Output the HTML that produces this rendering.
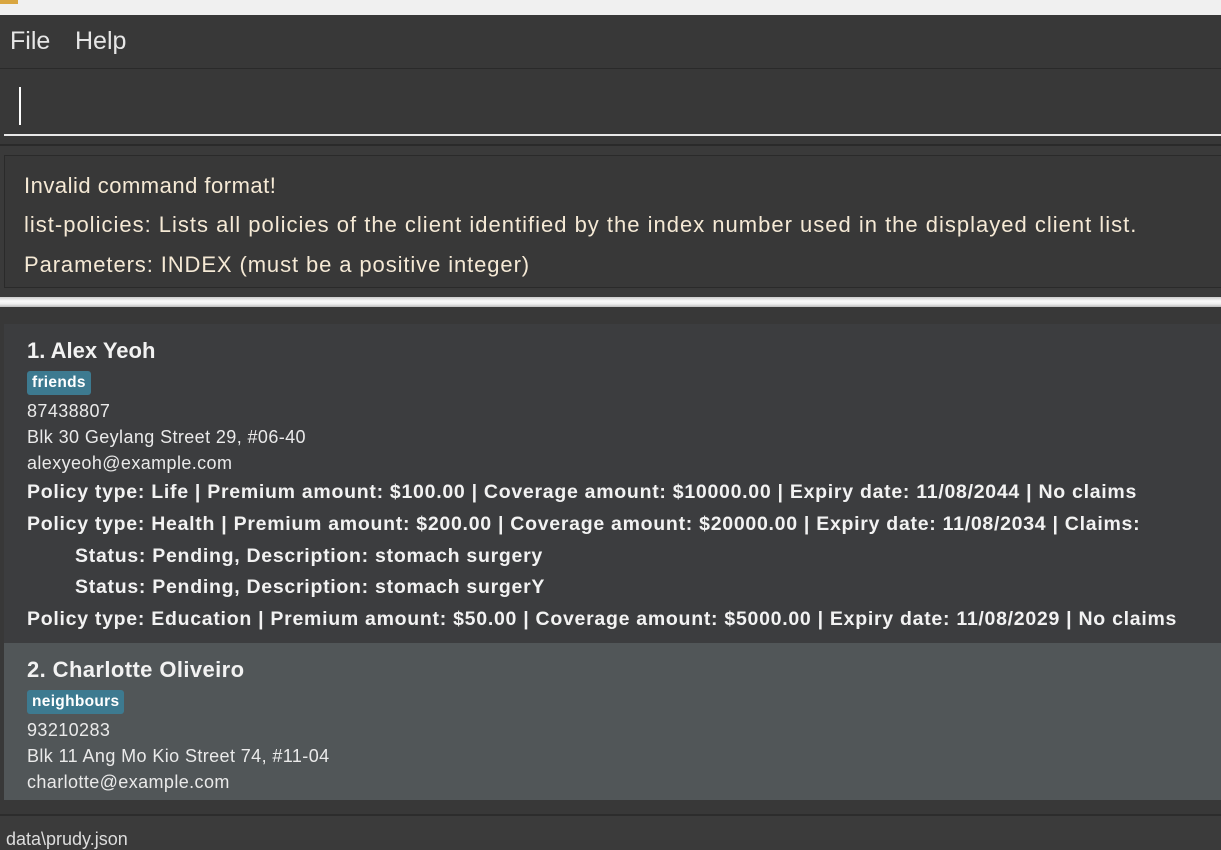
<!DOCTYPE html>
<html><head><meta charset="utf-8"><style>
body{margin:0;width:1221px;height:838px;overflow:hidden;background:#3a3a3a;font-family:"Liberation Sans",sans-serif;position:relative}
div{position:absolute;white-space:nowrap}
.b{font-weight:bold;font-size:19.5px;color:#f2f2f2;letter-spacing:0.72px}
.n{font-size:18px;color:#eaeaea;letter-spacing:0.4px}
.tag{background:#3d7a90;color:#fff;font-size:15.5px;border-radius:3px;padding:3px 5px;font-weight:bold;letter-spacing:0.3px}
</style></head><body>
<div style="left:0;top:0;width:1221px;height:15px;background:#f0f0f0"></div>
<div style="left:0;top:-6px;width:18px;height:10px;background:#d9a640"></div>
<div style="left:0;top:15px;width:1221px;height:53px;background:#383838;border-bottom:1px solid #2a2a2a"></div>
<div style="left:10px;top:27px;font-size:25px;color:#e6e6e6">File</div>
<div style="left:75px;top:27px;font-size:25px;color:#e6e6e6">Help</div>
<div style="left:0;top:69px;width:1221px;height:75px;background:#383838;border-bottom:2px solid #2a2a2a"></div>
<div style="left:19px;top:87px;width:2px;height:38px;background:#fff"></div>
<div style="left:4px;top:134px;width:1217px;height:2px;background:#e8e8e8"></div>
<div style="left:4px;top:155px;width:1217px;height:131px;background:#383838;border:1px solid #2a2a2a"></div>
<div style="left:24px;top:173px;font-size:22px;color:#f5e9d5;letter-spacing:0.5px">Invalid command format!</div>
<div style="left:24px;top:212px;font-size:22px;color:#f5e9d5;letter-spacing:1.0px">list-policies: Lists all policies of the client identified by the index number used in the displayed client list.</div>
<div style="left:24px;top:252px;font-size:22px;color:#f5e9d5;letter-spacing:0.9px">Parameters: INDEX (must be a positive integer)</div>
<div style="left:0;top:297px;width:1221px;height:10px;background:linear-gradient(#ccc,#fafafa 40%,#eee 70%,#bbb)"></div>
<div style="left:0;top:307px;width:1221px;height:508px;background:#383838"></div>
<div style="left:4px;top:324px;width:1217px;height:319px;background:#3c3d3f"></div>
<div style="left:4px;top:643px;width:1217px;height:157px;background:#515658"></div>
<div style="left:0;top:814px;width:1221px;height:24px;background:#3b3b3b;border-top:2px solid #2c2c2c"></div>
<div style="left:6px;top:829px;font-size:18px;color:#ddd">data\prudy.json</div>

<div style="left:27px;top:338px;font-size:22px;font-weight:bold;color:#f2f2f2">1. Alex Yeoh</div>
<div class="tag" style="left:27px;top:371px">friends</div>
<div class="n" style="left:27px;top:401px">87438807</div>
<div class="n" style="left:27px;top:427px">Blk 30 Geylang Street 29, #06-40</div>
<div class="n" style="left:27px;top:453px">alexyeoh@example.com</div>
<div class="b" style="left:27px;top:481px">Policy type: Life | Premium amount: $100.00 | Coverage amount: $10000.00 | Expiry date: 11/08/2044 | No claims</div>
<div class="b" style="left:27px;top:513px">Policy type: Health | Premium amount: $200.00 | Coverage amount: $20000.00 | Expiry date: 11/08/2034 | Claims:</div>
<div class="b" style="left:75px;top:545px">Status: Pending, Description: stomach surgery</div>
<div class="b" style="left:75px;top:576px">Status: Pending, Description: stomach surgerY</div>
<div class="b" style="left:27px;top:608px">Policy type: Education | Premium amount: $50.00 | Coverage amount: $5000.00 | Expiry date: 11/08/2029 | No claims</div>

<div style="left:27px;top:657px;font-size:22px;font-weight:bold;color:#f2f2f2;letter-spacing:0.4px">2. Charlotte Oliveiro</div>
<div class="tag" style="left:27px;top:690px">neighbours</div>
<div class="n" style="left:27px;top:720px">93210283</div>
<div class="n" style="left:27px;top:746px">Blk 11 Ang Mo Kio Street 74, #11-04</div>
<div class="n" style="left:27px;top:772px">charlotte@example.com</div>
</body></html>
